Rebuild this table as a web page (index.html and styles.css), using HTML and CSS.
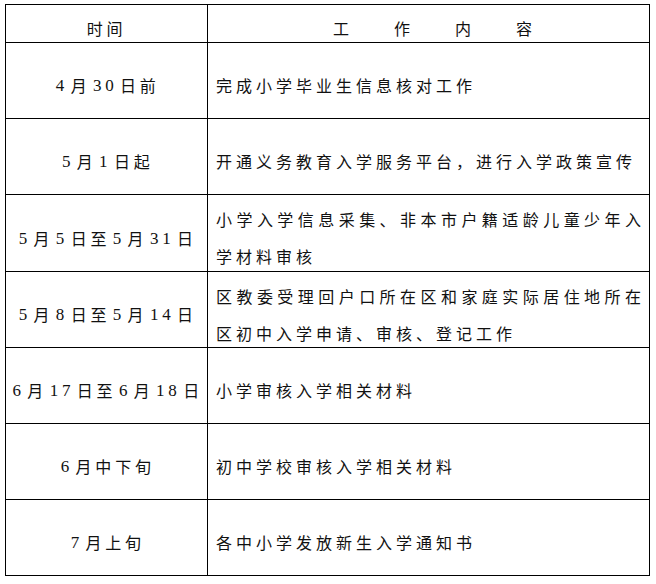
FILE: index.html
```html
<!DOCTYPE html>
<html lang="zh-CN">
<head>
<meta charset="utf-8">
<title>入学工作时间安排</title>
<link rel="stylesheet" href="styles.css">
</head>
<body>
<div class="sched">
  <div class="cell time head">时间</div>
  <div class="cell task head spread"><span>工</span><span>作</span><span>内</span><span>容</span></div>

  <div class="cell time"><span class="n">4</span>月<span class="n">30</span>日前</div>
  <div class="cell task"><div class="txt">完成小学毕业生信息核对工作</div></div>

  <div class="cell time"><span class="n">5</span>月<span class="n">1</span>日起</div>
  <div class="cell task"><div class="txt">开通义务教育入学服务平台，进行入学政策宣传</div></div>

  <div class="cell time"><span class="n">5</span>月<span class="n">5</span>日至<span class="n">5</span>月<span class="n">31</span>日</div>
  <div class="cell task"><div class="txt">小学入学信息采集、非本市户籍适龄儿童少年入学材料审核</div></div>

  <div class="cell time"><span class="n">5</span>月<span class="n">8</span>日至<span class="n">5</span>月<span class="n">14</span>日</div>
  <div class="cell task"><div class="txt">区教委受理回户口所在区和家庭实际居住地所在区初中入学申请、审核、登记工作</div></div>

  <div class="cell time"><span class="n">6</span>月<span class="n">17</span>日至<span class="n">6</span>月<span class="n">18</span>日</div>
  <div class="cell task"><div class="txt">小学审核入学相关材料</div></div>

  <div class="cell time"><span class="n">6</span>月中下旬</div>
  <div class="cell task"><div class="txt">初中学校审核入学相关材料</div></div>

  <div class="cell time"><span class="n">7</span>月上旬</div>
  <div class="cell task"><div class="txt">各中小学发放新生入学通知书</div></div>
</div>
</body>
</html>
```

FILE: styles.css
```css
html, body {
  margin: 0;
  padding: 0;
  background: #fff;
}

body {
  font-family: "Noto Sans CJK SC", "Noto Sans", sans-serif;
  font-size: 16px;
  color: #111;
}

.sched {
  display: grid;
  grid-template-columns: 202px 442px;
  grid-template-rows: 38px 76px 76px 77px 76px 76px 76px 76px;
  margin: 4px 0 0 5px;
  width: 645px;
  border-left: 1px solid #000;
  border-top: 1px solid #000;
  box-sizing: border-box;
}

.cell {
  box-sizing: border-box;
  border-right: 1px solid #000;
  border-bottom: 1px solid #000;
  display: flex;
  align-items: center;
  padding-top: 10px;
  line-height: 37px;
  letter-spacing: 4px;
}

.time {
  justify-content: center;
  white-space: nowrap;
  letter-spacing: 3.8px;
}

.time .n {
  font-family: "Liberation Serif", serif;
  font-size: 17px;
  padding: 0 2.5px;
}

.task {
  padding-left: 8px;
  padding-right: 4px;
}

.txt {
  width: 100%;
  text-align: justify;
}

.spread {
  justify-content: center;
  gap: 45px;
  padding-left: 12px;
  letter-spacing: 0;
}
```
